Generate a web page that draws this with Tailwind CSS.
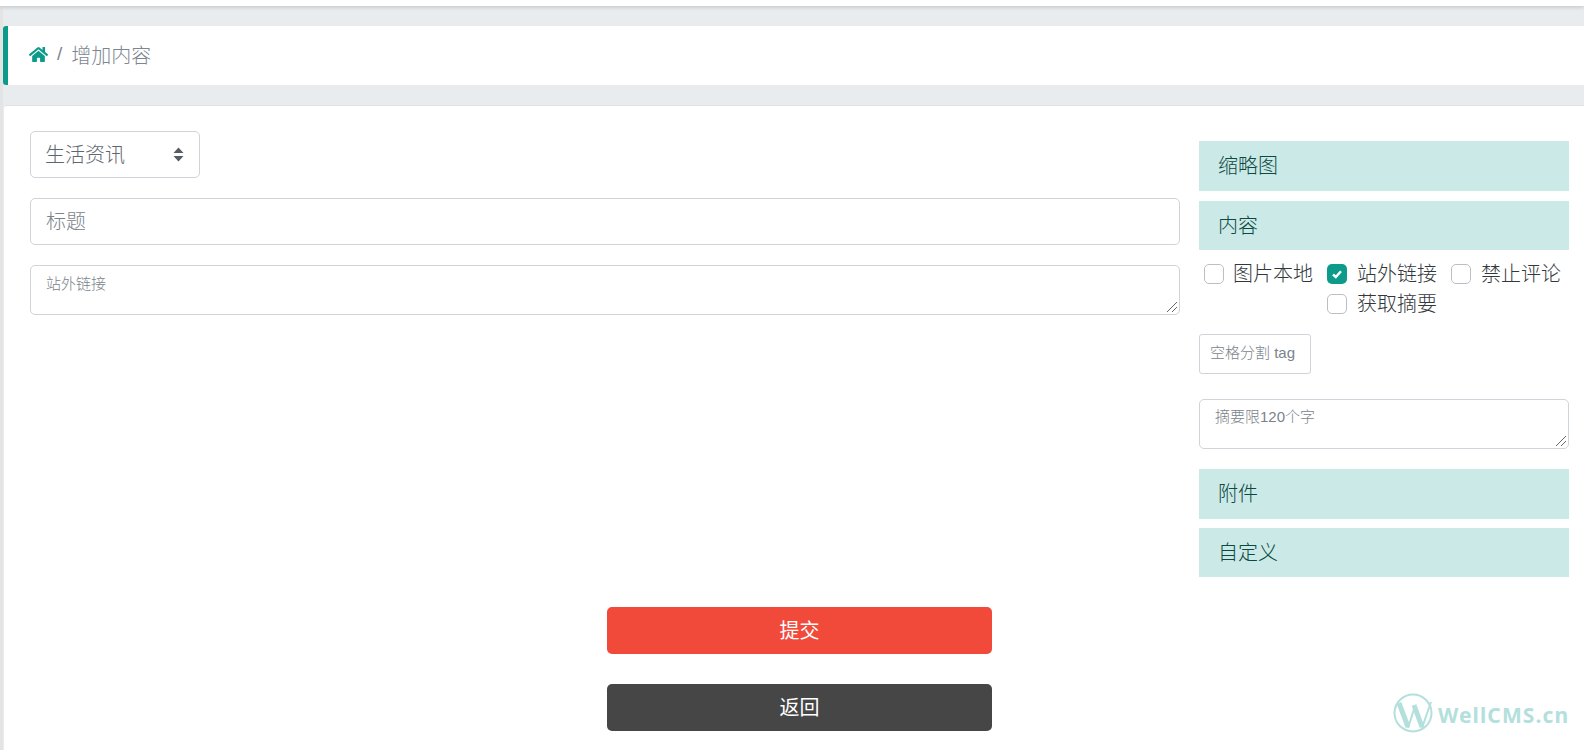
<!doctype html>
<html lang="zh">
<head>
<meta charset="utf-8">
<script src="https://cdn.jsdelivr.net/npm/@tailwindcss/browser@4"></script>
</head>
<body class="bg-[#e4e4e4] h-[750px] overflow-hidden font-['Noto_Sans_CJK_SC','Noto_Sans',sans-serif] font-light">
<div class="relative h-[750px] ml-[3px] bg-[#e9ecef]">
  <div class="h-[6px] -ml-[3px] bg-white shadow-[0_1px_4px_rgba(0,0,0,0.18)]"></div>
  <nav class="mt-[20px] h-[59px] bg-white border-l-[5px] border-[#0c9a8b] rounded-l-[3px] flex items-center pl-[21px] pb-[2px] text-[20px] text-[#7c868e]">
    <svg class="w-[19px] h-[17px] text-[#0c9a8b]" viewBox="0 0 576 512" fill="currentColor"><path d="M280.37 148.26L96 300.11V464a16 16 0 0 0 16 16l112.06-.29a16 16 0 0 0 15.92-16V368a16 16 0 0 1 16-16h64a16 16 0 0 1 16 16v95.64a16 16 0 0 0 16 16.05L464 480a16 16 0 0 0 16-16V300L295.67 148.26a12.19 12.19 0 0 0-15.3 0zM571.6 251.47L488 182.56V44.05a12 12 0 0 0-12-12h-56a12 12 0 0 0-12 12v72.61L318.47 43a48 48 0 0 0-61 0L4.34 251.47a12 12 0 0 0-1.6 16.9l25.5 31A12 12 0 0 0 45.15 301l235.22-193.74a12.19 12.19 0 0 1 15.3 0L530.9 301a12 12 0 0 0 16.9-1.6l25.5-31a12 12 0 0 0-1.7-16.93z"/></svg>
    <span class="ml-[9px] mr-[9px] font-['Liberation_Sans'] text-[19px]">/</span>
    <span>增加内容</span>
  </nav>
  <main class="mt-[20px] ml-px h-[645px] bg-white rounded-tl-[3px] border-t border-[#dfe3e6] pl-[26px] pt-[25px]">
    <div class="flex gap-[19px]">
      <div class="w-[1150px] flex flex-col">
        <div class="w-[170px] h-[47px] border border-[#ced4da] rounded-[5px] flex items-center justify-between pl-[14px] pr-[15px] pb-[2px] text-[20px] text-[#5f676e]">
          <span>生活资讯</span>
          <svg class="w-[11px] h-[15px] mt-[2px]" viewBox="0 0 11 15" fill="#555c64"><path d="M5.5 0.5L10.5 6H0.5z"/><path d="M5.5 14.5L0.5 9H10.5z"/></svg>
        </div>
        <div class="mt-[20px] h-[47px] border border-[#ced4da] rounded-[5px] flex items-center pl-[15px] pb-[2px] text-[20px] text-[#7b838a]">标题</div>
        <div class="relative mt-[20px] h-[50px] border border-[#ced4da] rounded-[5px] pl-[15px] pt-[6px] text-[15px] leading-[22px] text-[#7b838a]">站外链接
          <svg class="absolute right-[1px] bottom-[1px] w-[12px] h-[12px]" viewBox="0 0 12 12" stroke="#666" fill="none"><path d="M1 11L11 1M6 11L11 6"/></svg>
        </div>
      </div>
      <aside class="w-[370px] pt-[10px] flex flex-col">
        <div class="h-[50px] bg-[#cbe9e6] flex items-center pl-[19px] pb-[2px] text-[20px] text-[#0b4a43]">缩略图</div>
        <div class="mt-[10px] h-[49px] bg-[#cbe9e6] flex items-center pl-[19px] pb-[2px] text-[20px] text-[#0b4a43]">内容</div>
        <div class="mt-[9px] pl-[5px] grid grid-cols-[123px_124px_auto] text-[20px] leading-[28px] text-[#33383c]">
          <label class="h-[30px] flex items-center gap-[9px]"><span class="w-[20px] h-[20px] border border-[#b9bfc4] rounded-[5px] bg-white"></span><span class="pb-[2px]">图片本地</span></label>
          <label class="h-[30px] flex items-center gap-[10px]"><span class="w-[20px] h-[20px] rounded-[5px] bg-[#0c9a8b] flex items-center justify-center"><svg class="w-[12px] h-[12px]" viewBox="0 0 12 12" fill="none" stroke="#fff" stroke-width="2.4"><path d="M2 6.5L4.8 9L10 3.2"/></svg></span><span class="pb-[2px]">站外链接</span></label>
          <label class="h-[30px] flex items-center gap-[10px]"><span class="w-[20px] h-[20px] border border-[#b9bfc4] rounded-[5px] bg-white"></span><span class="pb-[2px]">禁止评论</span></label>
          <label class="h-[30px] col-start-2 flex items-center gap-[10px]"><span class="w-[20px] h-[20px] border border-[#b9bfc4] rounded-[5px] bg-white"></span><span class="pb-[2px]">获取摘要</span></label>
        </div>
        <div class="mt-[15px] w-[112px] h-[40px] border border-[#ced4da] rounded-[3px] flex items-center pl-[10px] pb-[1px] text-[15px] text-[#7b838a] whitespace-nowrap font-['Liberation_Sans','Noto_Sans_CJK_SC',sans-serif]">空格分割 tag</div>
        <div class="relative mt-[25px] h-[50px] border border-[#ced4da] rounded-[5px] pl-[15px] pt-[6px] text-[15px] leading-[22px] text-[#7b838a] font-['Liberation_Sans','Noto_Sans_CJK_SC',sans-serif]">摘要限120个字
          <svg class="absolute right-[1px] bottom-[1px] w-[12px] h-[12px]" viewBox="0 0 12 12" stroke="#666" fill="none"><path d="M1 11L11 1M6 11L11 6"/></svg>
        </div>
        <div class="mt-[20px] h-[50px] bg-[#cbe9e6] flex items-center pl-[19px] pb-[2px] text-[20px] text-[#0b4a43]">附件</div>
        <div class="mt-[9px] h-[49px] bg-[#cbe9e6] flex items-center pl-[19px] pb-[2px] text-[20px] text-[#0b4a43]">自定义</div>
      </aside>
    </div>
    <div class="pt-[30px] ml-[577px] w-[385px] flex flex-col gap-[30px]">
      <button class="h-[47px] rounded-[5px] bg-[#f1493a] text-white text-[20px] font-normal pb-[2px]">提交</button>
      <button class="h-[47px] rounded-[5px] bg-[#464646] text-white text-[20px] font-normal pb-[2px]">返回</button>
    </div>
  </main>
  <div class="absolute left-[1390px] top-[692px] flex items-center gap-[1px] text-[#b3e0dc]">
    <svg class="w-[44px] h-[42px]" viewBox="0 0 44 42" fill="none" stroke="currentColor"><circle cx="20" cy="21" r="18.5" stroke-width="2"/><path d="M6 11L15 35" stroke-width="5"/><path d="M15 36L22 14" stroke-width="2"/><path d="M21 13L29 35" stroke-width="5"/><path d="M29 36L38 10" stroke-width="2"/></svg>
    <span class="font-['Noto_Sans'] font-bold text-[21px] tracking-[1.1px] mt-[5px] whitespace-nowrap">WellCMS.cn</span>
  </div>
</div>
</body>
</html>
